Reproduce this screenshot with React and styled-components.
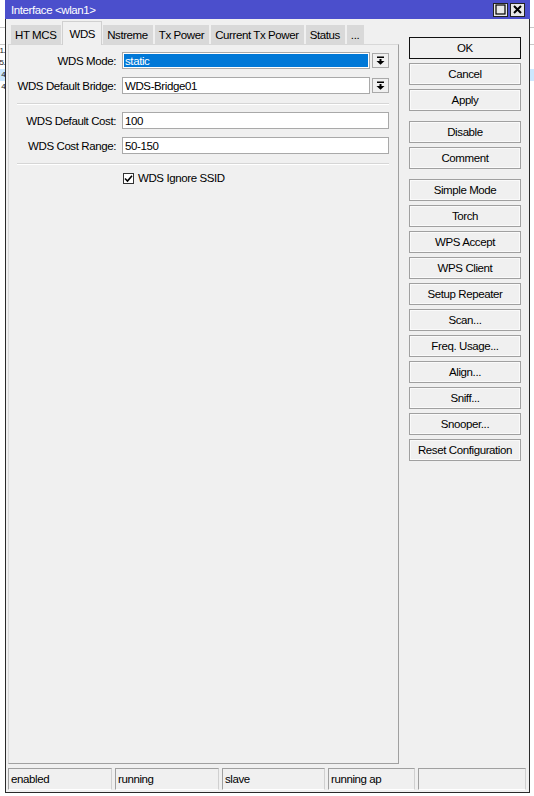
import React from "react";
import styled, { createGlobalStyle } from "styled-components";

const GlobalStyle = createGlobalStyle`
  html, body {
    margin: 0;
    padding: 0;
    background: #fff;
  }
  body {
    font-family: "Liberation Sans", Arial, sans-serif;
    font-size: 11.5px;
    letter-spacing: -0.4px;
    color: #000;
  }
`;

const tabs = ["HT MCS", "WDS", "Nstreme", "Tx Power", "Current Tx Power", "Status", "..."];

const buttonGroups = [
  ["OK", "Cancel", "Apply"],
  ["Disable", "Comment"],
  [
    "Simple Mode",
    "Torch",
    "WPS Accept",
    "WPS Client",
    "Setup Repeater",
    "Scan...",
    "Freq. Usage...",
    "Align...",
    "Sniff...",
    "Snooper...",
    "Reset Configuration",
  ],
];

const statusCells = [
  { text: "enabled", width: 104 },
  { text: "running", width: 104 },
  { text: "slave", width: 103 },
  { text: "running ap", width: 87 },
  { text: "", width: null },
];

// rows of the list window lying behind the dialog
const backRows = [
  { left: "1.", selected: false },
  { left: "5.", selected: false },
  { left: "4", selected: true },
  { left: "4", selected: false },
];

const DropArrow = () => (
  <svg width="9" height="9" viewBox="0 0 9 9">
    <rect x="1" y="0.5" width="7" height="1.5" fill="#000" />
    <rect x="3.5" y="3" width="2" height="2" fill="#000" />
    <polygon points="0.5,5 8.5,5 4.5,8.8" fill="#000" />
  </svg>
);

const CheckMark = () => (
  <svg width="9" height="9" viewBox="0 0 9 9">
    <path d="M1 4.5 L3.5 7 L8 1.8" stroke="#000" strokeWidth="1.6" fill="none" />
  </svg>
);

const App = () => {
  return (
    <Page>
      <GlobalStyle />

      <Backdrop>
        <BackHeader />
        {backRows.map((r, i) => (
          <BackRow key={i} $selected={r.selected}>
            <BackCell>{r.left}</BackCell>
          </BackRow>
        ))}
      </Backdrop>

      <Window>
        <TitleBar>
          <span>Interface &lt;wlan1&gt;</span>
          <TitleButtons>
            <TitleButton>
              <svg width="11" height="11" viewBox="0 0 11 11">
                <rect x="1" y="1" width="9" height="9" stroke="#000" strokeWidth="1.2" fill="none" />
              </svg>
            </TitleButton>
            <TitleButton>
              <svg width="11" height="11" viewBox="0 0 11 11">
                <path d="M2 2 L9 9 M9 2 L2 9" stroke="#000" strokeWidth="2" />
              </svg>
            </TitleButton>
          </TitleButtons>
        </TitleBar>

        <Frame>
          <Body>
            <MainColumn>
              <TabRow>
                {tabs.map((t) => (
                  <Tab key={t} $active={t === "WDS"}>
                    {t}
                  </Tab>
                ))}
              </TabRow>

              <Panel>
                <FormRow>
                  <Label>WDS Mode:</Label>
                  <SelectWrap>
                    <Field $highlighted>static</Field>
                    <DropButton>
                      <DropArrow />
                    </DropButton>
                  </SelectWrap>
                </FormRow>
                <FormRow>
                  <Label>WDS Default Bridge:</Label>
                  <SelectWrap>
                    <Field>WDS-Bridge01</Field>
                    <DropButton>
                      <DropArrow />
                    </DropButton>
                  </SelectWrap>
                </FormRow>

                <Separator />

                <FormRow>
                  <Label>WDS Default Cost:</Label>
                  <Field>100</Field>
                </FormRow>
                <FormRow>
                  <Label>WDS Cost Range:</Label>
                  <Field>50-150</Field>
                </FormRow>

                <Separator />

                <CheckRow>
                  <CheckBox>
                    <CheckMark />
                  </CheckBox>
                  <span>WDS Ignore SSID</span>
                </CheckRow>
              </Panel>
            </MainColumn>

            <SideColumn>
              {buttonGroups.map((group, gi) => (
                <ButtonGroup key={gi}>
                  {group.map((b) => (
                    <SideButton key={b} $primary={b === "OK"}>
                      {b}
                    </SideButton>
                  ))}
                </ButtonGroup>
              ))}
            </SideColumn>
          </Body>

          <StatusBar>
            {statusCells.map((c, i) => (
              <StatusCell key={i} $width={c.width}>
                {c.text}
              </StatusCell>
            ))}
          </StatusBar>
        </Frame>
      </Window>
    </Page>
  );
};

export default App;

// Styled Components
const Page = styled.div`
  position: relative;
  width: 534px;
  height: 796px;
  overflow: hidden;
  background: #fff;
`;

const Backdrop = styled.div`
  display: flex;
  flex-direction: column;
  padding-top: 27px;
  font-size: 8px;
  letter-spacing: -0.6px;
  color: #1a1a1a;
`;

const BackHeader = styled.div`
  height: 16px;
  border-top: 1px solid #c8c8c8;
  border-bottom: 1px solid #c8c8c8;
`;

const BackRow = styled.div`
  display: flex;
  align-items: center;
  height: 12px;
  background: ${(p) => (p.$selected ? "#cce8ff" : "#fff")};
`;

const BackCell = styled.div`
  width: 5px;
  display: flex;
  justify-content: flex-end;
  white-space: nowrap;
  line-height: 12px;
`;

const Window = styled.div`
  position: absolute;
  left: 5px;
  top: 0;
  width: 525px;
  height: 793px;
  display: flex;
  flex-direction: column;
  background: #f0f0f0;
`;

const TitleBar = styled.div`
  height: 19px;
  flex-shrink: 0;
  background: #4b4fcc;
  color: #fff;
  display: flex;
  align-items: center;
  justify-content: space-between;
  padding: 0 5px 0 6px;
  box-sizing: border-box;
  font-size: 11.5px;
`;

const TitleButtons = styled.div`
  display: flex;
  gap: 2px;
`;

const TitleButton = styled.div`
  width: 15px;
  height: 14px;
  box-sizing: border-box;
  border: 1px solid #222;
  background: #e8e8e8;
  display: flex;
  align-items: center;
  justify-content: center;
`;

const Frame = styled.div`
  flex: 1;
  display: flex;
  flex-direction: column;
  border: 1px solid #2a2a2a;
  border-top: none;
  min-height: 0;
`;

const Body = styled.div`
  flex: 1;
  display: flex;
  padding: 2px 8px 0 2px;
  min-height: 0;
`;

const MainColumn = styled.div`
  width: 391px;
  display: flex;
  flex-direction: column;
`;

const TabRow = styled.div`
  display: flex;
  align-items: flex-end;
  height: 23px;
  padding-left: 2px;
  position: relative;
  z-index: 1;
`;

const Tab = styled.div`
  height: ${(p) => (p.$active ? "24px" : "20px")};
  min-width: 18px;
  justify-content: center;
  box-sizing: border-box;
  padding: 0 ${(p) => (p.$active ? "6px" : "5px")} 0 ${(p) => (p.$active ? "6px" : "4px")};
  margin-bottom: ${(p) => (p.$active ? "-1px" : "0")};
  display: flex;
  align-items: center;
  white-space: nowrap;
  background: ${(p) => (p.$active ? "#f0f0f0" : "#d9d9d9")};
  border: 1px solid ${(p) => (p.$active ? "#d0d0d0" : "#f0f0f0")};
  border-bottom: none;
  font-size: 11.5px;
`;

const Panel = styled.div`
  flex: 1;
  box-sizing: border-box;
  border: 1px solid #d8d8d8;
  border-right-color: #a0a0a0;
  border-bottom-color: #a0a0a0;
  padding: 7px 9px 0 8px;
  display: flex;
  flex-direction: column;
`;

const FormRow = styled.div`
  display: grid;
  grid-template-columns: 99px 1fr;
  column-gap: 6px;
  align-items: center;
  height: 17px;
  margin-bottom: 8px;
`;

const Label = styled.div`
  text-align: right;
  white-space: nowrap;
`;

const SelectWrap = styled.div`
  display: flex;
  align-items: center;
  gap: 2px;
  height: 100%;
`;

const Field = styled.div`
  flex: 1;
  height: 17px;
  box-sizing: border-box;
  border: 1px solid #a9a9a9;
  background: ${(p) => (p.$highlighted ? "#0078d7" : "#fff")};
  color: ${(p) => (p.$highlighted ? "#fff" : "#000")};
  box-shadow: ${(p) => (p.$highlighted ? "inset 0 0 0 1px #fff" : "none")};
  padding-left: 2px;
  display: flex;
  align-items: center;
`;

const DropButton = styled.div`
  width: 17px;
  height: 15px;
  box-sizing: border-box;
  border: 1px solid #a9a9a9;
  background: #f0f0f0;
  display: flex;
  align-items: center;
  justify-content: center;
`;

const Separator = styled.div`
  height: 1px;
  background: #d6d6d6;
  border-bottom: 1px solid #fff;
  margin: 1px 0 7px;
`;

const CheckRow = styled.div`
  display: flex;
  align-items: center;
  gap: 4px;
  padding-left: 106px;
  height: 12px;
`;

const CheckBox = styled.div`
  width: 11px;
  height: 11px;
  box-sizing: border-box;
  border: 1px solid #333;
  background: #fff;
  display: flex;
  align-items: center;
  justify-content: center;
`;

const SideColumn = styled.div`
  width: 112px;
  margin-left: 10px;
  margin-top: 16px;
  display: flex;
  flex-direction: column;
  gap: 10px;
`;

const ButtonGroup = styled.div`
  display: flex;
  flex-direction: column;
  gap: 4px;
`;

const SideButton = styled.div`
  height: 22px;
  box-sizing: border-box;
  border: 1px solid ${(p) => (p.$primary ? "#111" : "#a0a0a0")};
  box-shadow: ${(p) => (p.$primary ? "inset 0 0 0 1px #f0f0f0" : "inset 0 0 0 1px #fafafa")};
  background: #f0f0f0;
  display: flex;
  align-items: center;
  justify-content: center;
  white-space: nowrap;
`;

const StatusBar = styled.div`
  display: flex;
  gap: 3px;
  padding: 4px 3px 2px 2px;
`;

const StatusCell = styled.div`
  height: 22px;
  box-sizing: border-box;
  width: ${(p) => (p.$width ? `${p.$width}px` : "auto")};
  flex: ${(p) => (p.$width ? "none" : "1")};
  border: 1px solid #a0a0a0;
  border-bottom-color: #fff;
  border-right-color: #d0d0d0;
  padding-left: 2px;
  display: flex;
  align-items: center;
  white-space: nowrap;
`;
